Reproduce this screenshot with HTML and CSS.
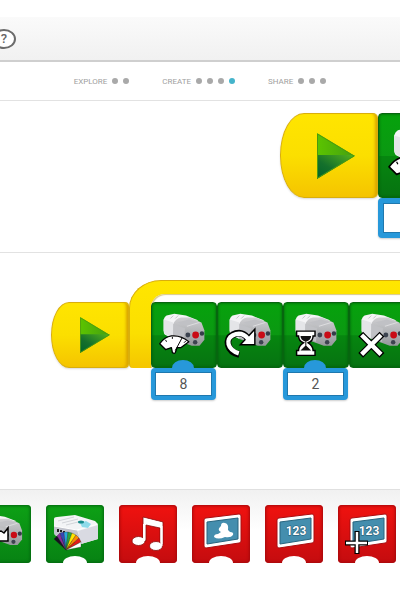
FILE: index.html
```
<!DOCTYPE html>
<html lang="en">
<head>
    <meta charset="UTF-8">
    <meta name="viewport" content="width=device-width, initial-scale=1.0">
    <title>Project program</title>
    <link rel="stylesheet" href="styles.css">
</head>
<body>
    <svg class="defs" aria-hidden="true">
        <defs>
            <linearGradient id="metal" x1="0" y1="0" x2="0" y2="1">
                <stop offset="0" stop-color="#cfcfd2"/>
                <stop offset="1" stop-color="#95989b"/>
            </linearGradient>
            <linearGradient id="play-top" x1="0" y1="0" x2="1" y2="0">
                <stop offset="0" stop-color="#5cc400"/>
                <stop offset="1" stop-color="#45a010"/>
            </linearGradient>
            <linearGradient id="play-bottom" x1="0" y1="1" x2="1" y2="0">
                <stop offset="0" stop-color="#00632a"/>
                <stop offset="0.4" stop-color="#15702c"/>
                <stop offset="1" stop-color="#55b41c"/>
            </linearGradient>
        </defs>
        <symbol id="play" viewBox="0 0 38 46">
            <path d="M0 0L38 23H0z" fill="url(#play-top)"/>
            <path d="M0 22H37L38 23 0 46z" fill="url(#play-bottom)"/>
            <path d="M.5 1L37 23 .5 45z" fill="none" stroke="#4a9a10"/>
        </symbol>
        <symbol id="motor" viewBox="0 0 66 66">
            <path d="M12 28L12 17Q13 14 15 13L23 11 35 13 48 18 30 22 22 37 14 33Q12 32 12 28z" fill="#f4f4f6"/>
            <path d="M12 17l10 3 1 17-8-4q-3-2-3-5z" fill="#e4e5e8"/>
            <path d="M19 16l3-3M24 16l3-3" stroke="#c4c4c8"/>
            <path d="M22 22Q24 16 30 15L39 15 51 20 54 28V38L49 44 41 44 22 37z" fill="url(#metal)"/>
            <path d="M26 20l12-3 10 3-12 4zM22 22l12 4-1 14-11-4z" fill="#c0c1c5"/>
            <path d="M36 24l13-4" stroke="#dedee0"/>
            <circle cx="37" cy="33" r="2.500" fill="#3c4350"/>
            <circle cx="45" cy="33" r="3.500" fill="#c90b16"/>
            <circle cx="51.500" cy="31.500" r="2.300" fill="#343c48"/>
            <circle cx="44.500" cy="40.500" r="2.300" fill="#3c4350"/>
        </symbol>
        <symbol id="gauge" viewBox="0 0 66 66">
            <path d="M8 42Q13 35 20 34 30 33 38 40L30 46 26 46 24 51Q23 53 21 51L20 46 14 48z" fill="#fff" stroke="#000" stroke-width="1.300" stroke-linejoin="round"/>
            <path d="M14 38l1 2M21 35v2M31 36L24 49M35 39l-2 2" stroke="#000"/>
        </symbol>
        <symbol id="screen" viewBox="0 0 58 58">
            <path d="M12 15Q12 13 14 13L47 9Q49 9 49 11V36Q49 38 47 38L14 43Q12 43 12 41z" fill="#fff" stroke="#a90d10"/>
            <path d="M15 17L46 13V34L15 39z" fill="#448eae" stroke="#28657f"/>
        </symbol>
    </svg>

    <header class="toolbar">
        <button class="help" aria-label="Help">?</button>
    </header>

    <nav class="phases">
        <div class="phase">
            <a href="#explore">EXPLORE</a>
            <span class="dot"></span><span class="dot"></span>
        </div>
        <div class="phase">
            <a href="#create">CREATE</a>
            <span class="dot"></span><span class="dot"></span><span class="dot"></span><span class="dot active"></span>
        </div>
        <div class="phase">
            <a href="#share">SHARE</a>
            <span class="dot"></span><span class="dot"></span><span class="dot"></span>
        </div>
    </nav>

    <main>
        <section class="stage stage-large">
            <button class="start" aria-label="Run"><svg><use href="#play"/></svg></button>
            <div class="step">
                <div class="block notched">
                    <svg viewBox="0 0 66 66"><use href="#motor"/><use href="#gauge"/></svg>
                </div>
                <input class="value" type="text" aria-label="Motor power">
            </div>
        </section>

        <section class="stage stage-small">
            <button class="start" aria-label="Run program"><svg><use href="#play"/></svg></button>
            <div class="loop">
                <div class="loop-body">
                    <div class="step">
                        <div class="block notched">
                            <svg viewBox="0 0 66 66"><use href="#motor"/><use href="#gauge"/></svg>
                        </div>
                        <input class="value" type="text" value="8" aria-label="Motor power">
                    </div>
                    <div class="step">
                        <div class="block">
                            <svg viewBox="0 0 66 66">
                                <use href="#motor"/>
                                <path d="M22 53C9 50 7 37 15 33 22 29 28 32 31 37" fill="none" stroke="#000" stroke-width="7"/>
                                <path d="M38 27V43H23z" fill="#fff" stroke="#000" stroke-width="1.500"/>
                                <path d="M21.500 52C9 48 8 37 15 33.500 22 30 27 32 31 37" fill="none" stroke="#fff" stroke-width="4.500"/>
                            </svg>
                        </div>
                    </div>
                    <div class="step">
                        <div class="block notched">
                            <svg viewBox="0 0 66 66">
                                <use href="#motor"/>
                                <path d="M13 29H32V34H30Q30 39 25 41 30 44 30 49H32V54H13V49H15Q15 44 20 41 15 39 15 34H13z" fill="#fff" stroke="#000" stroke-width="1.500"/>
                                <path d="M17 34H28Q28 38 22.500 40 17 38 17 34zM22 38h1v6l5 5H17l5-5z" fill="#111"/>
                            </svg>
                        </div>
                        <input class="value" type="text" value="2" aria-label="Wait time">
                    </div>
                    <div class="step">
                        <div class="block">
                            <svg viewBox="0 0 66 66">
                                <use href="#motor"/>
                                <path d="M11 32L33 54M33 32L11 54" stroke="#000" stroke-width="7"/>
                                <path d="M12 33L32 53M32 33L12 53" stroke="#fff" stroke-width="4.500"/>
                            </svg>
                        </div>
                    </div>
                </div>
            </div>
        </section>
    </main>

    <footer class="palette">
        <button class="tile green" aria-label="Motor direction">
            <svg viewBox="0 0 58 58">
                <use href="#motor" width="60" height="60"/>
                <path d="M15 36V24L21 28 28 26 31 28 35 23V36z" fill="#fff" stroke="#000" stroke-width="1.500"/>
            </svg>
        </button>
        <button class="tile green cut" aria-label="Light color">
            <svg viewBox="0 0 58 58">
                <path d="M8 14Q8 12 11 12L29 10 49 16Q52 18 52 21V34L35 39 8 28z" fill="#f3f4f6"/>
                <path d="M8 21L31 25 36 39 10 31Q8 30 8 28z" fill="#c3c5ce"/>
                <path d="M32 26L52 20V34L35 39z" fill="#d9dae2"/>
                <path d="M8 21L31 25 52 19" fill="none" stroke="#fff"/>
                <path d="M12 16l16-4M16 18l16-4M20 20l12-3" stroke="#d2d4d9"/>
                <path d="M34 18l6-2 5 3-3 4-6-1z" fill="#8edbea"/>
                <ellipse cx="35" cy="17" rx="3" ry="1.500" fill="#158b8b"/>
                <path d="M12 24v3M15 25v2M18 26v2" stroke="#222" stroke-width="2"/>
                <g stroke="#222" stroke-width=".3">
                    <path d="M20 45L8 34 11 31z" fill="#161020"/>
                    <path d="M20 45L11 31 14 28z" fill="#8e2a9c"/>
                    <path d="M20 45L14 28 18 27z" fill="#3547b7"/>
                    <path d="M20 45L18 27 22 27z" fill="#28a8dd"/>
                    <path d="M20 45L22 27 26 28z" fill="#28a83f"/>
                    <path d="M20 45L26 28 30 30z" fill="#ffe600"/>
                    <path d="M20 45L30 30 33 33z" fill="#ff8b00"/>
                    <path d="M20 45L33 33 35 37z" fill="#e51b18"/>
                    <path d="M20 45L35 37 35 42z" fill="#fff"/>
                </g>
            </svg>
        </button>
        <button class="tile red cut" aria-label="Play sound">
            <svg viewBox="0 0 58 58">
                <g fill="#fff" stroke="#8b0d0d" stroke-width=".8">
                    <path d="M24 12L44 17V40H41V23L27 20V36H24z"/>
                    <ellipse cx="19.500" cy="36" rx="6.500" ry="4.500"/>
                    <ellipse cx="37" cy="41" rx="6.500" ry="4.500"/>
                </g>
                <path d="M25 13L43 17.500V22L26 18.500z" fill="#fff"/>
                <path d="M25 19v17M42.500 21v20" stroke="#fff" stroke-width="2"/>
            </svg>
        </button>
        <button class="tile red cut" aria-label="Display background">
            <svg viewBox="0 0 58 58">
                <use href="#screen"/>
                <path d="M22 32Q22 29 26 29L29 27Q25 25 28 22L29 21Q29 17 33 18 37 19 36 25L38 27Q42 27 41 30 39 33 33 32 26 35 22 32z" fill="#fff"/>
            </svg>
        </button>
        <button class="tile red cut" aria-label="Display number">
            <svg viewBox="0 0 58 58">
                <use href="#screen"/>
                <text class="digits" x="31" y="30">123</text>
            </svg>
        </button>
        <button class="tile red cut" aria-label="Add to display">
            <svg viewBox="0 0 58 58">
                <use href="#screen"/>
                <text class="digits" x="31" y="30">123</text>
                <path d="M19 26V49M7 38H30" stroke="#000" stroke-width="5"/>
                <path d="M19 27V48M8 38H29" stroke="#fff" stroke-width="2.500"/>
            </svg>
        </button>
    </footer>
</body>
</html>
```
FILE: styles.css
```
* {
    margin: 0;
    padding: 0;
    box-sizing: border-box;
}

body {
    display: flex;
    flex-direction: column;
    min-height: 100vh;
    padding-top: 17px;
    background: #fff;
    font-family: Roboto, "Liberation Sans", sans-serif;
    overflow-x: hidden;
}

button {
    border: none;
    background: none;
    font-family: inherit;
    cursor: pointer;
}

svg {
    display: block;
}

.defs {
    position: absolute;
    width: 0;
    height: 0;
}

/* top bar */
.toolbar {
    display: flex;
    align-items: center;
    height: 45px;
    border-bottom: 2px solid #cfcfcf;
    background: linear-gradient(#fafafa, #f1f1f1);
}

.help {
    width: 24px;
    height: 20px;
    margin-left: -8px;
    border: 2px solid #6b6b6b;
    border-radius: 50%;
    background: #fff;
    color: #666;
    font-size: 13px;
    font-weight: 500;
    line-height: 16px;
}

.phases {
    display: flex;
    justify-content: center;
    gap: 33px;
    height: 39px;
    border-bottom: 1px solid #e2e2e2;
}

.phase {
    display: flex;
    align-items: center;
    gap: 5px;
}

.phase a {
    color: #a0a0a0;
    font-size: 8px;
    text-decoration: none;
}

.dot {
    width: 6px;
    height: 6px;
    border-radius: 50%;
    background: #a9a9a9;
}

.dot.active {
    background: #45b4cb;
}

/* programs */
.stage {
    display: flex;
    overflow: hidden;
}

.stage-large {
    --size: 85px;
    padding: 12px 0 54px 70%;
    border-bottom: 1px solid #e2e2e2;
}

.stage-small {
    --size: 66px;
    align-items: flex-end;
    padding: 27px 0 121px 51px;
}

.start {
    display: flex;
    flex-shrink: 0;
    align-items: center;
    width: 78px;
    height: var(--size);
    padding-left: 28px;
    border: 1px solid #d9ae0c;
    border-radius: 18px 4px 4px 18px / 33px 4px 4px 33px;
    background: linear-gradient(#ffe500, #fbdf00 50%, #f5c400);
    box-shadow: inset -4px 0 3px -2px #d9a400, 0 1px 2px rgba(0, 0, 0, 0.15);
}

.start svg {
    width: 30px;
    height: 36px;
}

.stage-large .start {
    width: 98px;
    padding-left: 36px;
    border-radius: 24px 5px 5px 24px / 42px 5px 5px 42px;
}

.stage-large .start svg {
    width: 38px;
    height: 46px;
}

.loop {
    flex-shrink: 0;
    padding: 13px 0 0 21px;
    border: 1px solid #d9ae0c;
    border-right: none;
    border-bottom: none;
    border-radius: 32px 0 0 4px / 28px 0 0 4px;
    background: linear-gradient(#ffe600, #fbdf00 60%, #f5c600);
}

.loop-body {
    display: flex;
    padding-top: 8px;
    border-radius: 14px 0 0 0;
    background: #fff;
    box-shadow: inset 1px 1px 1px #d8c98a;
}

.step {
    flex-shrink: 0;
    width: var(--size);
    height: var(--size);
}

.block {
    position: relative;
    height: var(--size);
    border: 1px solid #07660f;
    border-radius: 4px;
    background: linear-gradient(#06a20c, #0b9812 50%, #06860f 51%, #067311);
    box-shadow: inset 0 0 3px #02590c;
}

/* tab that joins a block to its value box */
.block.notched::after {
    content: "";
    position: absolute;
    left: 50%;
    bottom: -1px;
    width: 22px;
    height: 8px;
    margin-left: -12px;
    border-radius: 11px 11px 0 0 / 8px 8px 0 0;
    background: #2798da;
}

.value {
    display: block;
    width: calc(100% - 1px);
    height: 32px;
    border: 4px solid #2798da;
    border-radius: 4px;
    background: #fff;
    box-shadow: inset 0 0 0 1px #1f78ae, 0 1px 2px rgba(0, 0, 0, 0.2);
    color: #555;
    font-family: inherit;
    font-size: 14px;
    text-align: center;
}

.stage-large .value {
    height: 40px;
    border-width: 5px;
}

/* block palette */
.palette {
    display: flex;
    flex: 1;
    gap: 15px;
    padding: 15px 0 36px;
    border-top: 1px solid #e0e0e0;
    background: linear-gradient(#f1f1f1, #fff 40px);
    overflow: hidden;
}

.tile {
    position: relative;
    flex-shrink: 0;
    width: 58px;
    height: 58px;
    border-radius: 4px;
}

.tile:first-child {
    margin-left: -27px;
}

.tile svg {
    width: 58px;
    height: 58px;
}

.green {
    background: linear-gradient(#0da015, #078213);
    box-shadow: inset 0 0 3px 1px #036710;
}

.red {
    background: linear-gradient(#f0120f, #c40c0f);
    box-shadow: inset 0 0 3px 1px #a5090c;
}

.cut::after {
    content: "";
    position: absolute;
    left: 50%;
    bottom: 0;
    width: 24px;
    height: 7px;
    margin-left: -12px;
    border-radius: 12px 12px 0 0 / 7px 7px 0 0;
    background: #fff;
}

.digits {
    fill: #fff;
    stroke: #1d536b;
    stroke-width: 1px;
    paint-order: stroke;
    font-size: 12px;
    font-weight: 700;
    text-anchor: middle;
}
```
